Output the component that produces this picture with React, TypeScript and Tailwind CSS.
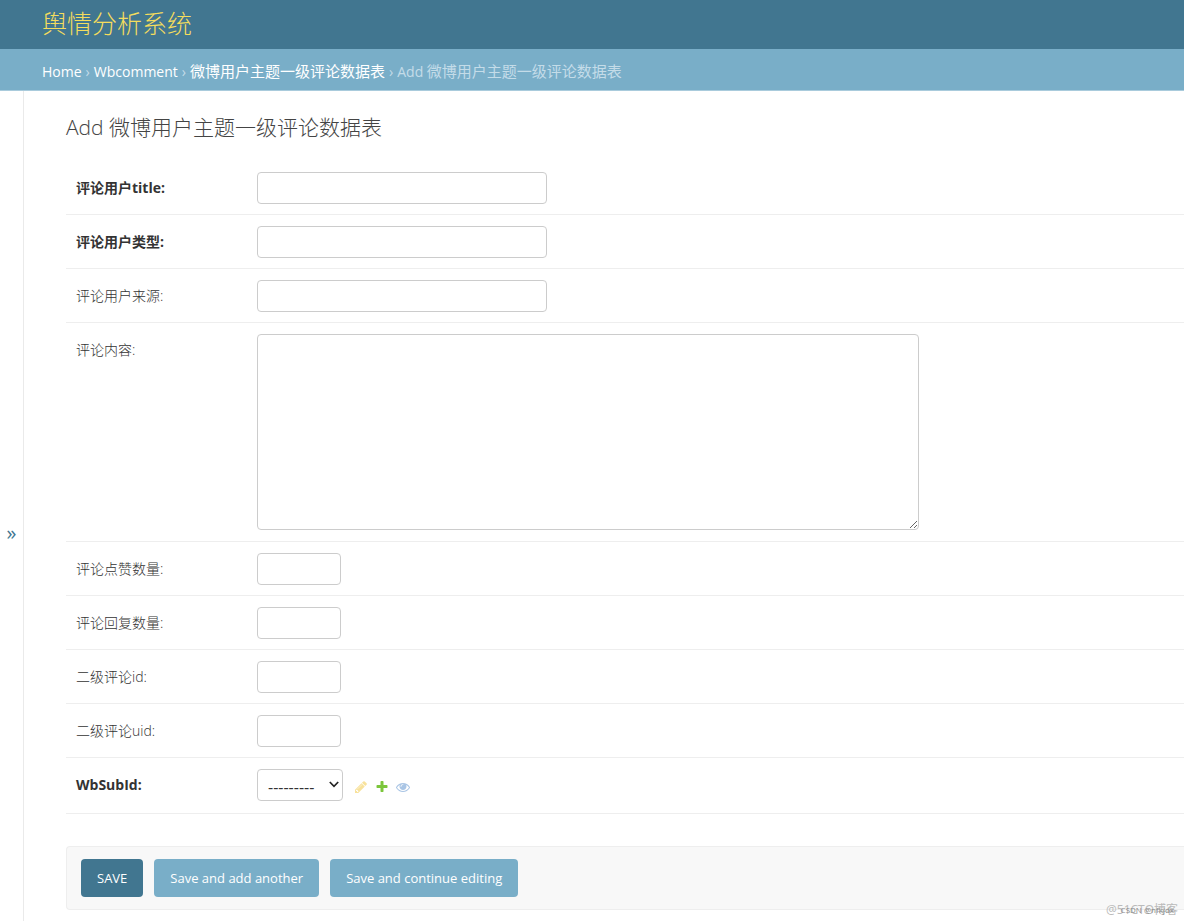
import React from "react";

interface Field {
  id: string;
  label: string;
  kind: "text" | "textarea" | "number" | "select";
  required?: boolean;
}

const MODEL_NAME = "微博用户主题一级评论数据表";

const fields: Field[] = [
  { id: "id_title", label: "评论用户title:", kind: "text", required: true },
  { id: "id_type", label: "评论用户类型:", kind: "text", required: true },
  { id: "id_source", label: "评论用户来源:", kind: "text" },
  { id: "id_content", label: "评论内容:", kind: "textarea" },
  { id: "id_likes", label: "评论点赞数量:", kind: "number" },
  { id: "id_replies", label: "评论回复数量:", kind: "number" },
  { id: "id_second_id", label: "二级评论id:", kind: "number" },
  { id: "id_second_uid", label: "二级评论uid:", kind: "number" },
  { id: "id_wbsubid", label: "WbSubId:", kind: "select", required: true },
];

const RelatedActions: React.FC = () => (
  <div className="flex items-center gap-[7px] pt-1">
    <button type="button" aria-label="Change" disabled>
      <svg className="block size-[14px]" viewBox="0 0 1792 1792" fill="#efb80b" opacity="0.4">
        <path d="M491 1536l91-91-235-235-91 91v107h128v128h107zm523-928q0-22-22-22-10 0-17 7l-542 542q-7 7-7 17 0 22 22 22 10 0 17-7l542-542q7-7 7-17zm-54-192l416 416-832 832h-416v-416zm683 96q0 53-37 90l-166 166-416-416 166-165q36-38 90-38 53 0 91 38l235 234q37 39 37 91z" />
      </svg>
    </button>
    <a href="#add" aria-label="Add">
      <svg className="block size-[14px]" viewBox="0 0 1792 1792" fill="#7cc63c">
        <path d="M1600 736v192q0 40-28 68t-68 28h-416v416q0 40-28 68t-68 28h-192q-40 0-68-28t-28-68v-416h-416q-40 0-68-28t-28-68v-192q0-40 28-68t68-28h416v-416q0-40 28-68t68-28h192q40 0 68 28t28 68v416h416q40 0 68 28t28 68z" />
      </svg>
    </a>
    <button type="button" aria-label="View" disabled>
      <svg className="block size-[14px]" viewBox="0 0 1792 1792" fill="#2b70bf" opacity="0.4">
        <path d="M1664 960q-152-236-381-353 61 104 61 225 0 185-131.500 316.500t-316.500 131.500-316.500-131.500-131.500-316.500q0-121 61-225-229 117-381 353 133 205 333.500 326.500t434.500 121.500 434.500-121.500 333.500-326.500zm-720-384q0-20-14-34t-34-14q-125 0-214.500 89.500t-89.500 214.500q0 20 14 34t34 14 34-14 14-34q0-86 61-147t147-61q20 0 34-14t14-34zm848 384q0 34-20 69-140 230-376.500 368.500t-499.500 138.500-499.500-139-376.500-368q-20-35-20-69t20-69q140-229 376.500-368t499.500-139 499.500 139 376.500 368q20 35 20 69z" />
      </svg>
    </button>
  </div>
);

const FieldControl: React.FC<{ field: Field }> = ({ field }) => {
  if (field.kind === "textarea") {
    return (
      <textarea
        id={field.id}
        className="mb-px block h-[196px] w-[662px] resize rounded border border-[#ccc] bg-white px-2 py-1"
      />
    );
  }
  if (field.kind === "select") {
    return (
      <div className="flex items-center gap-[11px]">
        <div className="relative">
          <select
            id={field.id}
            className="block h-8 w-[86px] appearance-none rounded border border-[#ccc] bg-white pt-1 pl-[10px] text-base text-[#333]"
          >
            <option>---------</option>
          </select>
          <svg
            className="pointer-events-none absolute top-[12px] right-[4px] h-[7px] w-[10px]"
            viewBox="0 0 10 7"
            fill="none"
            stroke="#222"
            strokeWidth="1.700"
          >
            <path d="M.8 1 5 5.300 9.200 1" />
          </svg>
        </div>
        <RelatedActions />
      </div>
    );
  }
  return (
    <input
      id={field.id}
      type="text"
      inputMode={field.kind === "number" ? "numeric" : "text"}
      className={
        field.kind === "number"
          ? "block h-8 w-[84px] rounded border border-[#ccc] bg-white px-2"
          : "block h-8 w-[290px] rounded border border-[#ccc] bg-white px-2"
      }
    />
  );
};

const FormRow: React.FC<{ field: Field }> = ({ field }) => (
  <div className="flex border-b border-[#eee] px-[10px] pt-[11px] pb-[10px] last:pb-3">
    <label
      htmlFor={field.id}
      className={
        field.required
          ? "w-[181px] shrink-0 leading-8 font-bold text-[#333]"
          : "w-[181px] shrink-0 leading-8 font-light text-[#333]"
      }
    >
      {field.label}
    </label>
    <FieldControl field={field} />
  </div>
);

export default function App() {
  return (
    <div className="relative flex min-h-screen flex-col overflow-hidden bg-white font-['Open_Sans','Noto_Sans_CJK_SC',sans-serif] text-sm text-[#333]">
      <header className="flex h-[49px] items-center bg-[#417690] px-[42px] pb-1">
        <h1 className="text-[25px] leading-8 font-light text-[#f5dd5d]">
          <a href="#index">舆情分析系统</a>
        </h1>
      </header>

      <nav
        aria-label="Breadcrumbs"
        className="flex h-[42px] items-center gap-1 border-b border-[#a9cbdc] bg-[#79aec8] px-[42px] pt-1 text-sm text-[#c4dce8]"
      >
        <a href="#home" className="text-white">Home</a>
        <span>›</span>
        <a href="#wbcomment" className="text-white">Wbcomment</a>
        <span>›</span>
        <a href="#list" className="text-[15px] text-white">{MODEL_NAME}</a>
        <span>›</span>
        <span>
          Add <span className="text-[15px]">{MODEL_NAME}</span>
        </span>
      </nav>

      <div className="flex flex-1">
        <button
          type="button"
          aria-label="Toggle navigation"
          className="w-6 shrink-0 border-r border-[#eaeaea] pt-[52px] text-xl text-[#417690]"
        >
          »
        </button>

        <main className="min-w-0 flex-1 pt-5 pb-3 pl-[42px]">
          <h2 className="mb-[18px] text-[21px] leading-8 font-light text-[#444]">Add {MODEL_NAME}</h2>
          <form onSubmit={(e) => e.preventDefault()}>
            <div>
              {fields.map((field) => (
                <FormRow key={field.id} field={field} />
              ))}
            </div>
            <div className="mt-8 flex gap-[11px] rounded-l border border-r-0 border-[#eee] bg-[#f8f8f8] px-[14px] py-3 text-[13px]">
              <button className="h-[38px] rounded bg-[#417690] px-4 text-white">SAVE</button>
              <button className="h-[38px] rounded bg-[#79aec8] px-4 text-white">Save and add another</button>
              <button className="h-[38px] rounded bg-[#79aec8] px-4 text-white">Save and continue editing</button>
            </div>
          </form>
        </main>
      </div>

      <span className="absolute right-[6px] bottom-1 text-xs leading-4 text-[#bbb]">@51CTO博客</span>
      <span className="absolute right-[10px] bottom-1 text-[8px] leading-4 text-[#888]">CSDN @nfkjdx</span>
    </div>
  );
}
